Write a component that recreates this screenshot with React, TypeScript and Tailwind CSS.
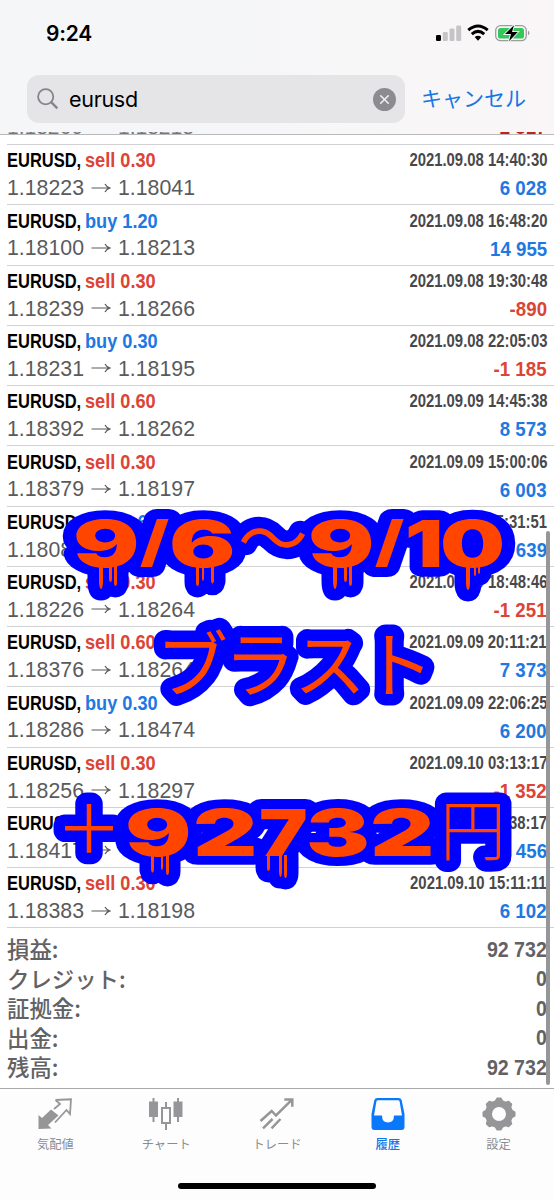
import { X } from "lucide-react";

const deals = [
  { side: "sell", lot: "0.30", from: "1.18223", to: "1.18041", time: "2021.09.08 14:40:30", profit: "6 028" },
  { side: "buy", lot: "1.20", from: "1.18100", to: "1.18213", time: "2021.09.08 16:48:20", profit: "14 955" },
  { side: "sell", lot: "0.30", from: "1.18239", to: "1.18266", time: "2021.09.08 19:30:48", profit: "-890" },
  { side: "buy", lot: "0.30", from: "1.18231", to: "1.18195", time: "2021.09.08 22:05:03", profit: "-1 185" },
  { side: "sell", lot: "0.60", from: "1.18392", to: "1.18262", time: "2021.09.09 14:45:38", profit: "8 573" },
  { side: "sell", lot: "0.30", from: "1.18379", to: "1.18197", time: "2021.09.09 15:00:06", profit: "6 003" },
  { side: "buy", lot: "0.60", from: "1.18089", to: "", time: "15:31:51", profit: "639" },
  { side: "sell", lot: "0.30", from: "1.18226", to: "1.18264", time: "2021.09.09 18:48:46", profit: "-1 251" },
  { side: "sell", lot: "0.60", from: "1.18376", to: "1.18264", time: "2021.09.09 20:11:21", profit: "7 373" },
  { side: "buy", lot: "0.30", from: "1.18286", to: "1.18474", time: "2021.09.09 22:06:25", profit: "6 200" },
  { side: "sell", lot: "0.30", from: "1.18256", to: "1.18297", time: "2021.09.10 03:13:17", profit: "-1 352" },
  { side: "", lot: "", from: "1.18417", to: "", time: "08:38:17", profit: "456" },
  { side: "sell", lot: "0.30", from: "1.18383", to: "1.18198", time: "2021.09.10 15:11:11", profit: "6 102" },
];

const totals = [
  { label: "損益:", value: "92 732" },
  { label: "クレジット:", value: "0" },
  { label: "証拠金:", value: "0" },
  { label: "出金:", value: "0" },
  { label: "残高:", value: "92 732" },
];

const Arrow = () => (
  <svg className="-mt-[3px]" width="20" height="12" viewBox="0 0 20 12" fill="none" stroke="#5a5a5d" strokeWidth="1.2">
    <path d="M0.5 6H18.5M14 2Q15.5 5 19 6Q15.5 7 14 10" />
  </svg>
);

const StatusBar = () => (
  <div className="flex h-[66px] items-center justify-between pl-[46px] pr-[23px]">
    <span className="font-['Inter'] text-[21px] font-semibold leading-none tracking-[-0.2px] text-black">9:24</span>
    <svg width="96" height="18" viewBox="0 0 96 18">
      <rect x="1" y="11" width="5" height="6" rx="1.2" fill="#000" />
      <rect x="7.8" y="8" width="5" height="9" rx="1.2" fill="#c5c5c7" />
      <rect x="14.5" y="4.5" width="5" height="12.5" rx="1.2" fill="#c5c5c7" />
      <rect x="21.2" y="1.5" width="5" height="15.5" rx="1.2" fill="#c5c5c7" />
      <g fill="none" stroke="#000" strokeWidth="3">
        <path d="M33.3 6.2Q43 -2.2 52.7 6.2" />
        <path d="M36.8 10.2Q43 4.6 49.2 10.2" />
      </g>
      <path d="M39.7 13Q43 10.3 46.3 13L43 16.7Z" />
      <rect x="60.7" y="1.7" width="30.6" height="15" rx="4.8" fill="none" stroke="#9c9c9e" strokeWidth="1.3" />
      <rect x="63" y="4" width="26" height="10.5" rx="2.6" fill="#35c759" />
      <path d="M93 6.5Q96 9 93 11.5Z" fill="#9c9c9e" />
      <path d="M79 1.2L70 10H76L74 17.2L82.8 8H77Z" fill="#000" stroke="#f6f6f8" strokeWidth="1.8" paintOrder="stroke" />
    </svg>
  </div>
);

const SearchBar = () => (
  <div className="flex items-center pl-[27px] pt-[9px]">
    <div className="flex h-12 w-[378px] items-center rounded-xl bg-[#e5e5e8] pl-[10px] pr-[9px]">
      <svg width="22" height="22" viewBox="0 0 22 22" fill="none" stroke="#85858a">
        <circle cx="8.7" cy="8.7" r="7.6" strokeWidth="1.8" />
        <path d="M14.2 14.2L20.3 20.3" strokeWidth="2.4" />
      </svg>
      <span className="ml-[10px] flex-1 pt-[2px] font-['Inter'] text-[21.5px] leading-none tracking-[-0.3px] text-black">eurusd</span>
      <span className="flex size-[23px] items-center justify-center rounded-full bg-[#8b8b90] text-[#eeeeef]">
        <X size={15} strokeWidth={2.6} />
      </span>
    </div>
    <span className="ml-4 whitespace-nowrap pb-[4px] font-['Noto_Sans_CJK_JP'] text-[21px] leading-none text-[#1476e5]">キャンセル</span>
  </div>
);

const DealRow = ({ deal }: { deal: (typeof deals)[number] }) => (
  <div className="ml-[7px] h-[60.25px] border-b border-[#d2d2d4] pr-[7px] pt-[2px] font-['Liberation_Sans'] text-[21px]">
    <div className="flex h-[27px] items-center justify-between whitespace-nowrap font-bold">
      <div className="-mt-px flex">
        <span className="w-[78px]">
          <span className="inline-block origin-left scale-x-[0.785] text-black">EURUSD,</span>
        </span>
        <span className={`inline-block origin-left scale-x-[0.865] ${deal.side === "buy" ? "text-[#1e78e2]" : "text-[#dc4436]"}`}>
          {deal.side} {deal.lot}
        </span>
      </div>
      <span className="inline-block origin-right scale-x-[0.85] text-[17.5px] text-[#48484b]">{deal.time}</span>
    </div>
    <div className="flex h-[28px] items-center justify-between whitespace-nowrap">
      <div className="flex items-center gap-[7px] pt-[2px] text-[21.3px] text-[#5a5a5d]">
        <span className="w-[77px]">{deal.from}</span>
        <Arrow />
        <span>{deal.to}</span>
      </div>
      <span className={`inline-block origin-right scale-x-[0.89] font-bold ${deal.profit.startsWith("-") ? "text-[#dc4436]" : "text-[#1e78e2]"}`}>
        {deal.profit}
      </span>
    </div>
  </div>
);

// ch, x, baseline, horizontal stretch, vertical stretch
const digits: [string, number, number, number, number][] = [
  ["9", 73, 567, 1.54, 1],
  ["/", 140, 561, 1.1, 0.86],
  ["6", 169, 567, 1.54, 1],
  ["9", 308, 567, 1.54, 1],
  ["/", 375, 561, 1.1, 0.86],
  ["1", 405, 567, 1.32, 1],
  ["0", 440, 567, 1.43, 1],
  ["9", 125, 856, 1.54, 1],
  ["2", 193, 856, 1.56, 1],
  ["7", 259, 856, 1.28, 1],
  ["3", 306, 856, 1.49, 1],
  ["2", 370, 856, 1.56, 1],
];

// ch, x, baseline, size, weight
const kana: [string, number, number, number, number][] = [
  ["～", 238, 565, 70, 400],
  ["ブ", 156, 690.5, 72, 400],
  ["ラ", 224, 690.5, 72, 400],
  ["ス", 294, 690.5, 72, 400],
  ["ト", 362, 690.5, 72, 400],
  ["＋", 56, 853, 66, 400],
  ["円", 440, 855, 66, 300],
];

const drips = [
  "M99 566h4v15a2 8 0 0 1-4 0zM109 566h3v12a1.5 4 0 0 1-3 0zM114 566h3v16a1.5 4 0 0 1-3 0z",
  "M196 566h3v16a1.5 4 0 0 1-3 0zM202 566h2v12a1 3 0 0 1-2 0zM211 566h3v15a2 8 0 0 1-3 0z",
  "M333 566h4v15a2 8 0 0 1-4 0zM344 566h3v12a1.5 4 0 0 1-3 0zM349 566h3v16a1.5 4 0 0 1-3 0z",
  "M466 566h4v17a2 7 0 0 1-4 0zM474 566h2v8a1 2 0 0 1-2 0zM478 566h2v6a1 2 0 0 1-2 0z",
  "M151 855h3v15a2 8 0 0 1-3 0zM161 855h2v12a1 3 0 0 1-2 0zM166 855h3v16a1.5 4 0 0 1-3 0z",
  "M267 855h3v12a1.5 4 0 0 1-3 0zM279 855h3v16a1.5 6 0 0 1-3 0zM284 855h3v18a1.5 5 0 0 1-3 0z",
];

const CaptionGlyphs = () => (
  <>
    {digits.map(([ch, x, y, sx, sy], i) => (
      <text key={i} transform={`translate(${x} ${y}) scale(${sx} ${sy})`} fontSize="64" fontWeight="900" fontFamily="Inter, sans-serif" vectorEffect="non-scaling-stroke">
        {ch}
      </text>
    ))}
    {kana.map(([ch, x, y, size, weight]) => (
      <text key={ch} x={x} y={y} fontSize={size} fontWeight={weight} fontFamily="'Noto Sans CJK JP', sans-serif">
        {ch}
      </text>
    ))}
    {drips.map((d) => (
      <path key={d} d={d} />
    ))}
  </>
);

const Caption = () => (
  <svg className="absolute left-0 top-0" width="554" height="1200" viewBox="0 0 554 1200" strokeLinejoin="round" strokeLinecap="round">
    <g fill="#0000ff" stroke="#0000ff" strokeWidth="23">
      <CaptionGlyphs />
    </g>
    {/* the wide outline leaves pinholes in the counters */}
    <g fill="#0000ff">
      <ellipse cx="105" cy="536" rx="14" ry="8" />
      <ellipse cx="203" cy="551" rx="14" ry="8" />
      <ellipse cx="340" cy="536" rx="14" ry="8" />
      <ellipse cx="472" cy="544" rx="14" ry="18" />
      <ellipse cx="157" cy="825" rx="14" ry="8" />
    </g>
    <g fill="#ff4500">
      <CaptionGlyphs />
    </g>
  </svg>
);

const tabs = [
  {
    label: "気配値",
    icon: (
      <>
        <path d="M1.5 32V18L5 21L14 12.5L21.5 18.5L11 28L14.5 31.5Z" fill="#969698" />
        <path d="M18.5 3L34 2.3L33 17L29.5 13L18 25.5M18.5 3L23 7L17 12" fill="none" stroke="#969698" strokeWidth="1.8" />
      </>
    ),
  },
  {
    label: "チャート",
    icon: (
      <g stroke="#969698" fill="#969698">
        <path d="M5.5 1V25M18 5V11M18 26V33M30 1V25" strokeWidth="2" />
        <path d="M1 4.5H10V20H1ZM25.5 4.5H34.5V20H25.5Z" stroke="none" />
        <path d="M14 11H22V26H14Z" fill="none" strokeWidth="2" />
      </g>
    ),
  },
  {
    label: "トレード",
    icon: (
      <g fill="none" stroke="#969698" strokeWidth="2.5">
        <path d="M1.5 24L12.7 14L17 18.5L32.5 3.2M25.3 2.5H33.3V9.7" />
        <path d="M4 31.3L13.5 22M12.5 31.3L21.5 22" />
      </g>
    ),
  },
  {
    label: "履歴",
    active: true,
    icon: (
      <path
        fillRule="evenodd"
        fill="#0a78fa"
        d="M7.5 1H28.5Q31 1 31.7 3.3L34.5 17V30Q34.5 33 31.5 33H4.5Q1.5 33 1.5 30V17L4.3 3.3Q5 1 7.5 1ZM8 3.3Q6.7 3.3 6.4 4.6L4 18.5H12Q12 25.5 18 25.5Q24 25.5 24 18.5H32L29.6 4.6Q29.3 3.3 28 3.3Z"
      />
    ),
  },
  {
    label: "設定",
    icon: (
      <g>
        <circle cx="18" cy="17" r="10.5" fill="none" stroke="#969698" strokeWidth="7" />
        {[0, 45, 90, 135, 180, 225, 270, 315].map((a) => (
          <path key={a} d="M13.3 5L15.2 1.2Q15.5 0.5 16.3 0.5H19.7Q20.5 0.5 20.8 1.2L22.7 5Z" fill="#969698" transform={`rotate(${a} 18 17)`} />
        ))}
      </g>
    ),
  },
];

const TabBar = () => (
  <nav className="grid h-[112px] grid-cols-5 border-t border-[#aaaaac] bg-[#fdfdfe] pt-2 font-['Noto_Sans_CJK_JP'] text-[12.3px]">
    {tabs.map((tab) => (
      <div key={tab.label} className="flex flex-col items-center">
        <svg width="36" height="34" viewBox="0 0 36 34">
          {tab.icon}
        </svg>
        <span className={`mt-1 leading-[18px] ${tab.active ? "font-medium text-[#1476e5]" : "text-[#8c8c8f]"}`}>{tab.label}</span>
      </div>
    ))}
  </nav>
);

export default function App() {
  return (
    <div className="relative flex h-[1200px] w-[554px] flex-col overflow-hidden bg-white">
      <header className="h-[135px] shrink-0 overflow-hidden border-b border-[#b9b9bc] bg-linear-to-r from-[#f5f6f8] via-[#f6f6f8] to-[#faf6f7]">
        <StatusBar />
        <SearchBar />
        <div className="mt-[9px] flex h-[2px] items-end justify-between overflow-hidden whitespace-nowrap px-[7px] font-['Liberation_Sans'] text-[21px] leading-[25px]">
          <div className="-mb-[5px] flex text-[#77777a]">
            <span className="w-[111px]">1.18260</span>
            <span>1.18218</span>
          </div>
          <span className="-mb-[5px] inline-block origin-right scale-x-[0.89] font-bold text-[#c52020]">-2 817</span>
        </div>
      </header>
      <main className="flex-1">
        <div className="ml-[7px] h-[10px] border-b border-[#d2d2d4]" />
        {deals.map((deal) => (
          <DealRow key={deal.time} deal={deal} />
        ))}
        <div className="flex flex-col pl-[7px] pr-[7px] pt-[7px] text-[#626265]">
          {totals.map((row) => (
            <div key={row.label} className="flex h-[29.5px] items-center justify-between">
              <span className="pb-[3px] font-['Noto_Sans_CJK_JP'] text-[22.4px] font-medium leading-none">{row.label}</span>
              <span className="inline-block origin-right scale-x-[0.91] font-['Liberation_Sans'] text-[21.5px] font-bold">{row.value}</span>
            </div>
          ))}
        </div>
      </main>
      <TabBar />
      <div className="absolute left-[546px] top-[531px] h-[554px] w-1 rounded-full bg-[#969698]" />
      <div className="absolute left-[178px] top-[1183px] h-[6px] w-[198px] rounded-full bg-black" />
      <Caption />
    </div>
  );
}
